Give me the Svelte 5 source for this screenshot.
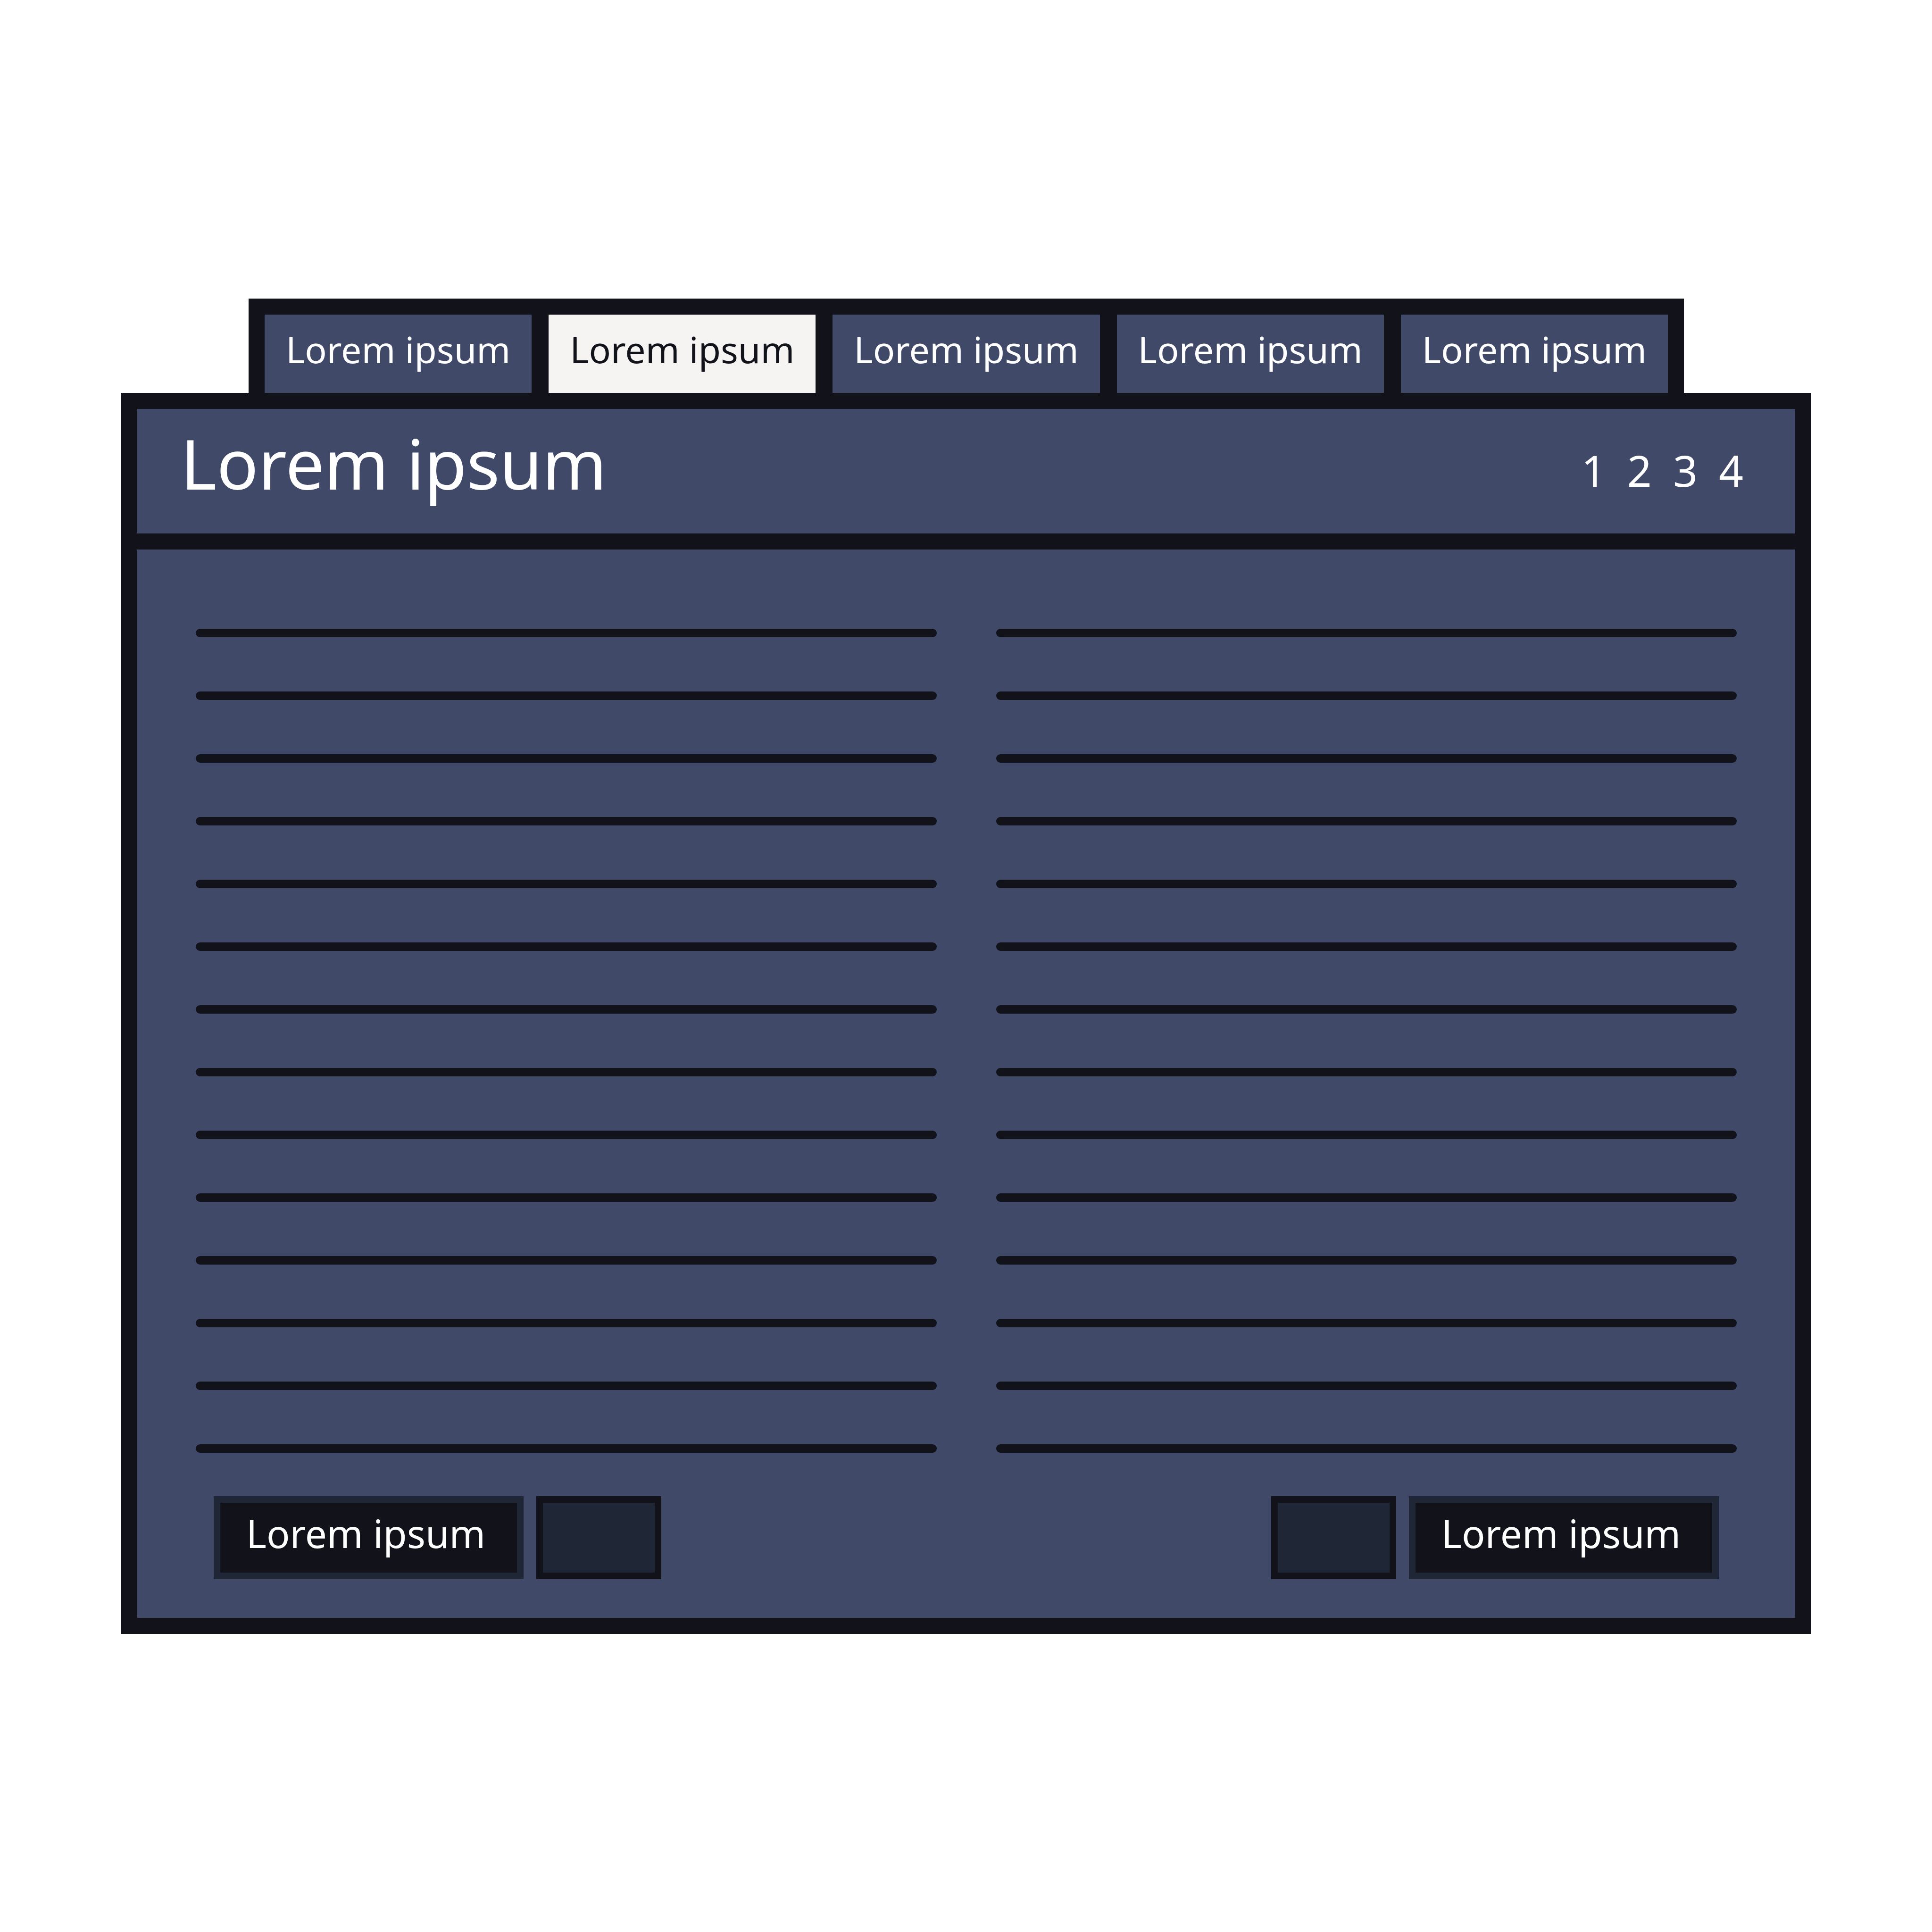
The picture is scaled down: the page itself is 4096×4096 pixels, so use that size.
<script>
  const tabs = ['Lorem ipsum', 'Lorem ipsum', 'Lorem ipsum', 'Lorem ipsum', 'Lorem ipsum'];
  const pages = [1, 2, 3, 4];
  const columns = [0, 1];
  const lines = Array.from({ length: 14 }, (_, i) => i);
  let active = $state(1);
</script>

<main class="page">
  <nav class="tabs" aria-label="Sections">
    {#each tabs as tab, i}
      <button class="tab" class:active={i === active} onclick={() => (active = i)}>{tab}</button>
    {/each}
  </nav>

  <section class="panel">
    <header class="header">
      <h1 class="title">Lorem ipsum</h1>
      <nav class="pager" aria-label="Pages">
        {#each pages as page}
          <a class="page-link" href={`#page-${page}`}>{page}</a>
        {/each}
      </nav>
    </header>

    <div class="body">
      <div class="columns">
        {#each columns as column (column)}
          <div class="column">
            {#each lines as line (line)}
              <div class="line"></div>
            {/each}
          </div>
        {/each}
      </div>

      <footer class="actions">
        <div class="group">
          <button class="action">Lorem ipsum</button>
          <button class="slot" aria-label="Left option"></button>
        </div>
        <div class="group">
          <button class="slot" aria-label="Right option"></button>
          <button class="action">Lorem ipsum</button>
        </div>
      </footer>
    </div>
  </section>
</main>

<style>
  :global(body) {
    background: #ffffff;
  }

  .page {
    --ink: #11121a;
    --fill: #404967;
    --slate: #1f2635;
    --paper: #f5f4f2;
    padding: 633px 256px 630px 257px;
    font-family: 'Noto Sans', 'Open Sans', sans-serif;
    color: #ffffff;
  }

  button {
    box-sizing: border-box;
    margin: 0;
    border: 0;
    border-radius: 0;
    font: inherit;
    color: inherit;
    cursor: pointer;
  }

  .tabs {
    display: grid;
    grid-template-columns: repeat(5, 1fr);
    gap: 36px;
    margin: 0 270px;
    padding: 34px 34px 0;
    background: var(--ink);
  }

  .tab {
    padding: 24px 0 42px;
    background: var(--fill);
    font-size: 77px;
    line-height: 100px;
    text-align: center;
    white-space: nowrap;
  }

  .tab.active {
    background: var(--paper);
    color: var(--ink);
  }

  .panel {
    border: 34px solid var(--ink);
    background: var(--fill);
  }

  .header {
    display: flex;
    align-items: center;
    justify-content: space-between;
    padding: 0 110px 0 92px;
    border-bottom: 34px solid var(--ink);
  }

  .title {
    margin: 0;
    padding: 35px 0 69px;
    font-size: 146px;
    line-height: 160px;
    font-weight: 400;
  }

  .pager {
    display: flex;
    gap: 45px;
    padding-bottom: 4px;
    font-size: 91px;
    line-height: 100px;
  }

  .page-link {
    color: inherit;
    text-decoration: none;
  }

  .body {
    padding: 168px 124px 82px;
  }

  .columns {
    display: grid;
    grid-template-columns: 1fr 1fr;
    gap: 126px;
  }

  .column {
    display: grid;
    gap: 115px;
  }

  .line {
    height: 18px;
    border-radius: 9px;
    background: var(--ink);
  }

  .actions {
    display: flex;
    justify-content: space-between;
    margin-top: 92px;
    padding: 0 38px;
  }

  .group {
    display: flex;
    gap: 27px;
  }

  .action {
    width: 657px;
    padding: 14px 0 34px 55px;
    border: 14px solid var(--slate);
    background: var(--ink);
    font-size: 82px;
    line-height: 100px;
    text-align: left;
    white-space: nowrap;
  }

  .slot {
    width: 265px;
    border: 14px solid var(--ink);
    background: var(--slate);
  }
</style>
